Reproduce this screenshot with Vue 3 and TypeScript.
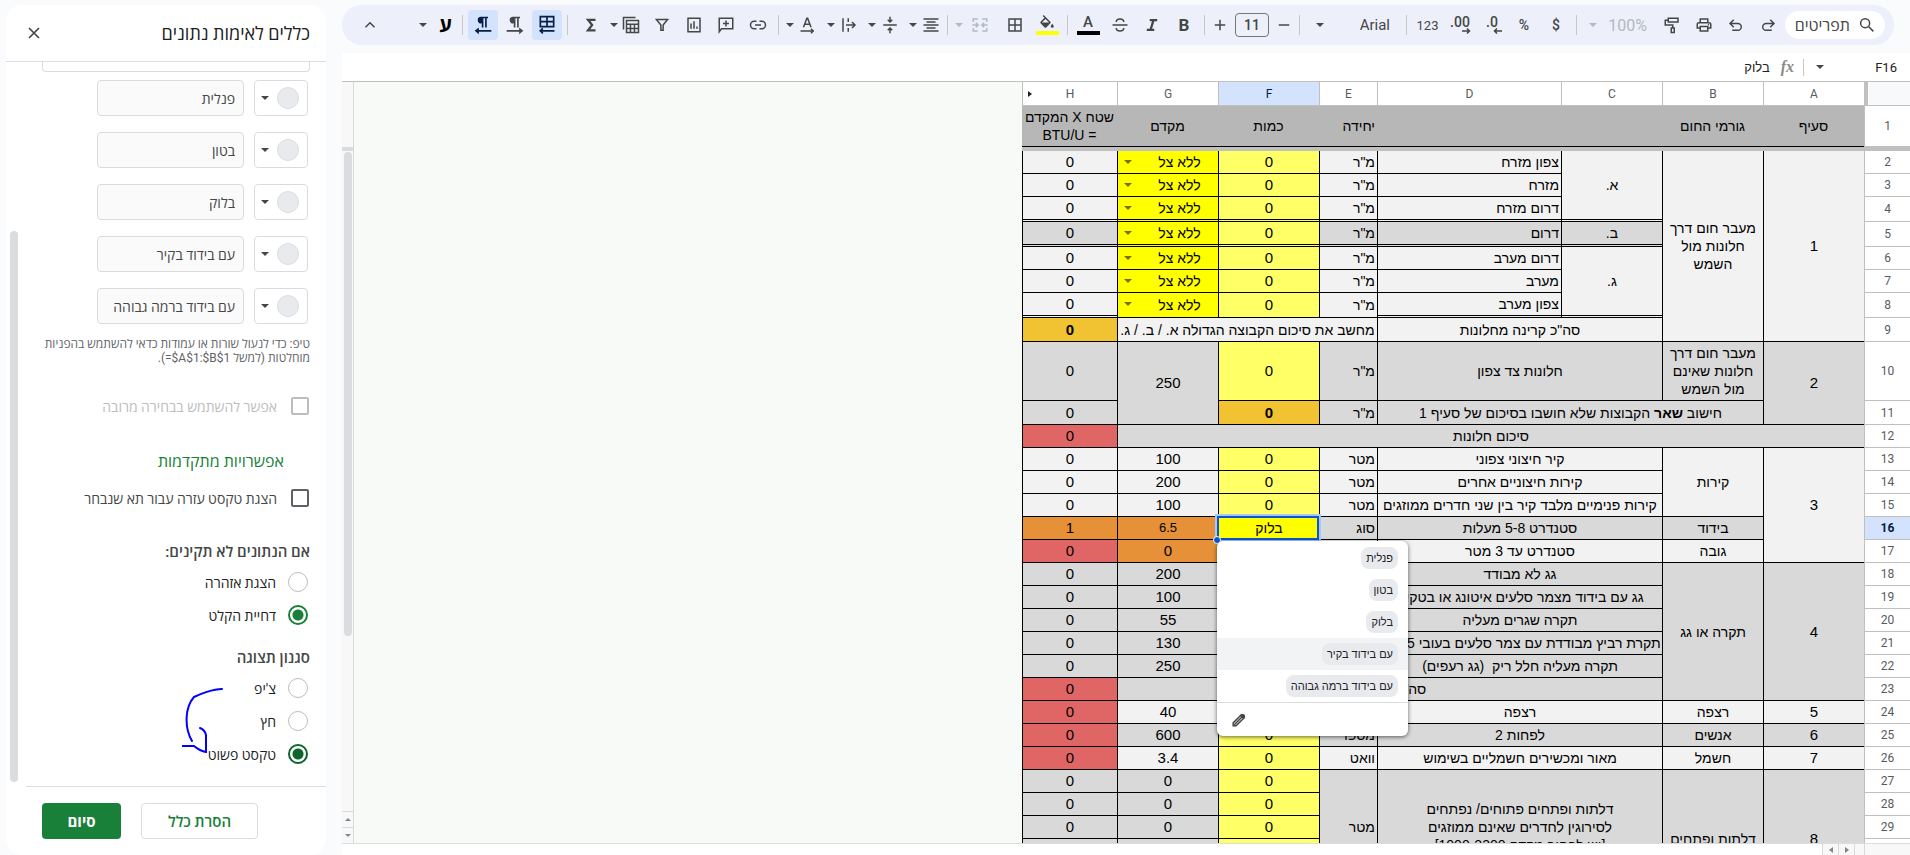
<script setup lang="ts">
import { ref } from 'vue'

interface Cell {
  t?: string
  c?: string
  cs?: number
  rs?: number
  drop?: boolean
  sel?: boolean
  lines?: string[]
  strong?: [string, string, string]
}
interface Row {
  n: number
  h: number
  cells: Cell[]
}

const options: string[] = ['פנלית', 'בטון', 'בלוק', 'עם בידוד בקיר', 'עם בידוד ברמה גבוהה']
const columns: string[] = ['A', 'B', 'C', 'D', 'E', 'F', 'G', 'H']

const invalidMode = ref('reject')
const displayStyle = ref('plain')
const allowMulti = ref(false)
const showHelp = ref(false)

const isNumber = (t?: string): boolean => /^[\d.]+$/.test(t ?? '')

const unit = 'מ"ר'
const zeroH: Cell = { t: '0' }
const qty: Cell = { t: '0', c: 'pale' }
const shade: Cell = { t: 'ללא צל', c: 'yellow', drop: true }

const rows: Row[] = [
  { n: 2, h: 23, cells: [{ t: '1', rs: 8 }, { lines: ['מעבר חום דרך', 'חלונות מול', 'השמש'], rs: 8 }, { t: 'א.', rs: 3, c: 'dbl' }, { t: 'צפון מזרח', c: 'start' }, { t: unit, c: 'start' }, qty, shade, zeroH] },
  { n: 3, h: 23, cells: [{ t: 'מזרח', c: 'start' }, { t: unit, c: 'start' }, qty, shade, zeroH] },
  { n: 4, h: 25, cells: [{ t: 'דרום מזרח', c: 'start dbl' }, { t: unit, c: 'start dbl' }, { t: '0', c: 'pale dbl' }, { ...shade, c: 'yellow dbl' }, { t: '0', c: 'dbl' }] },
  { n: 5, h: 25, cells: [{ t: 'ב.', c: 'grey dbl' }, { t: 'דרום', c: 'grey start dbl' }, { t: unit, c: 'grey start dbl' }, { t: '0', c: 'pale dbl' }, { ...shade, c: 'yellow dbl' }, { t: '0', c: 'grey dbl' }] },
  { n: 6, h: 23, cells: [{ t: 'ג.', rs: 3, c: 'dbl' }, { t: 'דרום מערב', c: 'start' }, { t: unit, c: 'start' }, qty, shade, zeroH] },
  { n: 7, h: 23, cells: [{ t: 'מערב', c: 'start' }, { t: unit, c: 'start' }, qty, shade, zeroH] },
  { n: 8, h: 25, cells: [{ t: 'צפון מערב', c: 'start dbl' }, { t: unit, c: 'start' }, qty, shade, { t: '0', c: 'dbl' }] },
  { n: 9, h: 24, cells: [{ t: 'סה"כ קרינה מחלונות', cs: 2 }, { t: 'מחשב את סיכום הקבוצה הגדולה א. / ב. / ג.', cs: 3 }, { t: '0', c: 'gold bold' }] },
  { n: 10, h: 59, cells: [{ t: '2', rs: 2, c: 'grey' }, { lines: ['מעבר חום דרך', 'חלונות שאינם', 'מול השמש'], c: 'grey' }, { t: 'חלונות צד צפון', cs: 2, c: 'grey' }, { t: unit, c: 'grey start' }, qty, { t: '250', rs: 2, c: 'grey' }, { t: '0', c: 'grey' }] },
  { n: 11, h: 24, cells: [{ strong: ['חישוב ', 'שאר', ' הקבוצות שלא חושבו בסיכום של סעיף 1'], cs: 3, c: 'grey' }, { t: unit, c: 'grey start' }, { t: '0', c: 'gold bold' }, { t: '0', c: 'grey' }] },
  { n: 12, h: 23, cells: [{ t: 'סיכום חלונות', cs: 7, c: 'grey' }, { t: '0', c: 'red' }] },
  { n: 13, h: 23, cells: [{ t: '3', rs: 5 }, { t: 'קירות', rs: 3 }, { t: 'קיר חיצוני צפוני', cs: 2 }, { t: 'מטר', c: 'start' }, qty, { t: '100' }, zeroH] },
  { n: 14, h: 23, cells: [{ t: 'קירות חיצוניים אחרים', cs: 2 }, { t: 'מטר', c: 'start' }, qty, { t: '200' }, zeroH] },
  { n: 15, h: 23, cells: [{ t: 'קירות פנימיים מלבד קיר בין שני חדרים ממוזגים', cs: 2 }, { t: 'מטר', c: 'start' }, qty, { t: '100' }, zeroH] },
  { n: 16, h: 23, cells: [{ t: 'בידוד', c: 'grey' }, { t: 'סטנדרט 5-8 מעלות', cs: 2, c: 'grey' }, { t: 'סוג', c: 'grey start' }, { t: 'בלוק', c: 'yellow', sel: true }, { t: '6.5', c: 'orange small' }, { t: '1', c: 'orange' }] },
  { n: 17, h: 23, cells: [{ t: 'גובה' }, { t: 'סטנדרט עד 3 מטר', cs: 2 }, {}, { c: 'pale' }, { t: '0', c: 'orange' }, { t: '0', c: 'red' }] },
  { n: 18, h: 23, cells: [{ t: '4', rs: 6, c: 'grey' }, { t: 'תקרה או גג', rs: 6, c: 'grey' }, { t: 'גג לא מבודד', cs: 2, c: 'grey' }, { c: 'grey' }, { c: 'pale' }, { t: '200', c: 'grey' }, { t: '0', c: 'grey' }] },
  { n: 19, h: 23, cells: [{ t: 'גג עם בידוד מצמר סלעים איטונג או בטקיט', cs: 2, c: 'grey' }, { c: 'grey' }, { c: 'pale' }, { t: '100', c: 'grey' }, { t: '0', c: 'grey' }] },
  { n: 20, h: 23, cells: [{ t: 'תקרה שגרים מעליה', cs: 2, c: 'grey' }, { c: 'grey' }, { c: 'pale' }, { t: '55', c: 'grey' }, { t: '0', c: 'grey' }] },
  { n: 21, h: 23, cells: [{ t: 'תקרת רביץ מבודדת עם צמר סלעים בעובי 5 ס"מ', cs: 2, c: 'grey' }, { c: 'grey' }, { c: 'pale' }, { t: '130', c: 'grey' }, { t: '0', c: 'grey' }] },
  { n: 22, h: 23, cells: [{ t: 'תקרה מעליה חלל ריק  (גג רעפים)', cs: 2, c: 'grey' }, { c: 'grey' }, { c: 'pale' }, { t: '250', c: 'grey' }, { t: '0', c: 'grey' }] },
  { n: 23, h: 23, cells: [{ t: 'סה"כ תקרות', cs: 5, c: 'grey' }, { t: '0', c: 'red' }] },
  { n: 24, h: 23, cells: [{ t: '5' }, { t: 'רצפה' }, { t: 'רצפה', cs: 2 }, {}, { c: 'pale' }, { t: '40' }, { t: '0', c: 'red' }] },
  { n: 25, h: 23, cells: [{ t: '6', c: 'grey' }, { t: 'אנשים', c: 'grey' }, { t: 'לפחות 2', cs: 2, c: 'grey' }, { t: 'מספר', c: 'grey start' }, qty, { t: '600', c: 'grey' }, { t: '0', c: 'red' }] },
  { n: 26, h: 23, cells: [{ t: '7' }, { t: 'חשמל' }, { t: 'מאור ומכשירים חשמליים בשימוש', cs: 2 }, { t: 'וואט', c: 'start' }, qty, { t: '3.4' }, { t: '0', c: 'red' }] },
  { n: 27, h: 23, cells: [{ t: '8', rs: 6, c: 'grey' }, { t: 'דלתות ופתחים', rs: 6, c: 'grey' }, { lines: ['דלתות ופתחים פתוחים/ נפתחים', 'לסירוגין לחדרים שאינם ממוזגים', '[יש לבחור מקדם 1000-2300]'], cs: 2, rs: 5, c: 'grey' }, { t: 'מטר', rs: 5, c: 'grey start' }, qty, { t: '0', c: 'grey' }, { t: '0', c: 'grey' }] },
  { n: 28, h: 23, cells: [qty, { t: '0', c: 'grey' }, { t: '0', c: 'grey' }] },
  { n: 29, h: 23, cells: [qty, { t: '0', c: 'grey' }, { t: '0', c: 'grey' }] },
  { n: 30, h: 23, cells: [qty, { t: '0', c: 'grey' }, { t: '0', c: 'grey' }] },
  { n: 31, h: 23, cells: [qty, { t: '0', c: 'grey' }, { t: '0', c: 'grey' }] },
  { n: 32, h: 23, cells: [{ cs: 2, c: 'grey' }, { c: 'grey' }, qty, { t: '0', c: 'grey' }, { t: '0', c: 'grey' }] },
]
</script>

<template>
  <div class="app" dir="rtl">
    <main class="main">
      <div class="toolbar" role="toolbar" aria-label="סרגל כלים">
        <button class="menus" type="button">
          <svg viewBox="0 0 24 24" class="ico"><circle cx="9.5" cy="9.5" r="6" fill="none" stroke="currentColor" stroke-width="2" /><path d="M14 14l6.5 6.5" stroke="currentColor" stroke-width="2" /></svg>
          <span>תפריטים</span>
        </button>
        <button class="tb" type="button" aria-label="ביצוע מחדש"><svg viewBox="0 0 24 24" class="ico"><path d="M15 5l5 5-5 5M19 10H9.500a4.500 4.500 0 0 0 0 9H17" fill="none" stroke="currentColor" stroke-width="2" /></svg></button>
        <button class="tb" type="button" aria-label="ביטול"><svg viewBox="0 0 24 24" class="ico"><path d="M9 5l-5 5 5 5M5 10h9.500a4.500 4.500 0 0 1 0 9H7" fill="none" stroke="currentColor" stroke-width="2" /></svg></button>
        <button class="tb" type="button" aria-label="הדפסה"><svg viewBox="0 0 24 24" class="ico"><path d="M19 8h-1V3H6v5H5c-1.700 0-3 1.300-3 3v6h4v4h12v-4h4v-6c0-1.700-1.300-3-3-3zM8 5h8v3H8V5zm8 14H8v-4h8v4zm2-4v-2H6v2H4v-4c0-.6.4-1 1-1h14c.6 0 1 .4 1 1v4h-2z" fill="currentColor" /><circle cx="18" cy="11.500" r="1" fill="currentColor" /></svg></button>
        <button class="tb" type="button" aria-label="צביעת עיצוב"><svg viewBox="0 0 24 24" class="ico"><path d="M7 3h13v5H7zM7 5.500H3V12h10v4M11 16h4v6h-4z" fill="none" stroke="currentColor" stroke-width="2" /></svg></button>
        <button class="zoom" type="button" disabled><span>100%</span><i class="caret"></i></button>
        <i class="sep"></i>
        <button class="tb txt" type="button">$</button>
        <button class="tb txt" type="button">%</button>
        <button class="tb dec" type="button" dir="ltr"><span>.0</span><svg viewBox="0 0 10 6"><path d="M9 3H2M4 .5L1.500 3 4 5.500" fill="none" stroke="currentColor" stroke-width="1.500" /></svg></button>
        <button class="tb dec" type="button" dir="ltr"><span>.00</span><svg viewBox="0 0 10 6"><path d="M1 3h7M6 .5L8.500 3 6 5.500" fill="none" stroke="currentColor" stroke-width="1.500" /></svg></button>
        <button class="tb num" type="button">123</button>
        <i class="sep"></i>
        <button class="font" type="button"><span>Arial</span><i class="caret"></i></button>
        <i class="sep"></i>
        <button class="step" type="button" aria-label="הקטנת גופן"><svg viewBox="0 0 24 24" class="ico"><path d="M5 12h14" stroke="currentColor" stroke-width="2" /></svg></button>
        <input class="size" value="11" aria-label="גודל גופן" />
        <button class="step" type="button" aria-label="הגדלת גופן"><svg viewBox="0 0 24 24" class="ico"><path d="M5 12h14M12 5v14" stroke="currentColor" stroke-width="2" /></svg></button>
        <i class="sep"></i>
        <button class="tb bld" type="button">B</button>
        <button class="tb" type="button" aria-label="נטוי"><svg viewBox="0 0 24 24" class="ico"><path d="M9 5.500h10M5 18.500h10M14 5.500l-4 13" fill="none" stroke="currentColor" stroke-width="3" /></svg></button>
        <button class="tb" type="button" aria-label="קו חוצה"><svg viewBox="0 0 24 24" class="ico"><path d="M2 12h20M17 8c0-2.500-2-4-5-4S7 5.500 7 8M7 16c0 2.500 2 4 5 4s5-1.500 5-4" fill="none" stroke="currentColor" stroke-width="2" /></svg></button>
        <button class="tb ink" type="button"><span>A</span><i class="bar black"></i></button>
        <i class="sep"></i>
        <button class="tb ink" type="button" aria-label="צבע מילוי"><svg viewBox="0 0 24 20"><path d="M16.500 8.900L7.600 0 6.200 1.400l2.400 2.400-5.200 5.200c-.5.5-.5 1.500 0 2.100l5.500 5.500c.6.6 1.500.6 2.100 0l5.500-5.600c.5-.6.5-1.500 0-2.100zM5.200 10L10 5.200 14.800 10zM19 11.500s-2 2.200-2 3.500a2 2 0 0 0 4 0c0-1.300-2-3.500-2-3.500z" fill="currentColor" /></svg><i class="bar bright"></i></button>
        <button class="tb" type="button" aria-label="גבולות"><svg viewBox="0 0 24 24" class="ico"><path d="M4 4h16v16H4zM12 4v16M4 12h16" fill="none" stroke="currentColor" stroke-width="2" /></svg></button>
        <button class="merge" type="button" disabled aria-label="מיזוג תאים"><svg viewBox="0 0 24 24" class="ico"><path d="M9 4H3v4M3 16v4h6M15 4h6v4M21 16v4h-6M2 12h7M15 12h7M6.500 9l3 3-3 3M17.500 9l-3 3 3 3" fill="none" stroke="currentColor" stroke-width="2" /></svg><i class="caret"></i></button>
        <i class="sep"></i>
        <div class="splits">
          <button class="split" type="button" aria-label="יישור אופקי"><svg viewBox="0 0 24 24" class="ico"><path d="M2 4h20M6 8h12M2 12h20M6 16h12M2 20h20" stroke="currentColor" stroke-width="2" /></svg><i class="caret"></i></button>
          <button class="split" type="button" aria-label="יישור אנכי"><svg viewBox="0 0 24 24" class="ico"><path d="M3 12h18M12 1v6M12 23v-6M9 5l3 3 3-3M9 19l3-3 3 3" fill="none" stroke="currentColor" stroke-width="2" /></svg><i class="caret"></i></button>
          <button class="split" type="button" aria-label="גלישת טקסט"><svg viewBox="0 0 24 24" class="ico"><path d="M4 3v18M11 3v5M11 16v5M8 12h11M16 8l4 4-4 4" fill="none" stroke="currentColor" stroke-width="2" /></svg><i class="caret"></i></button>
          <button class="split" type="button" aria-label="סיבוב טקסט"><svg viewBox="0 0 24 24" class="ico"><path d="M6 15l4.500-12h1L16 15M7.500 11h7M2 20h17M16 17l3 3-3 3" fill="none" stroke="currentColor" stroke-width="2" /></svg><i class="caret"></i></button>
        </div>
        <i class="sep"></i>
        <button class="tb" type="button" aria-label="קישור"><svg viewBox="0 0 24 24" class="ico"><path d="M10 7H7a5 5 0 0 0 0 10h3M14 7h3a5 5 0 0 1 0 10h-3M8 12h8" fill="none" stroke="currentColor" stroke-width="2" /></svg></button>
        <button class="tb" type="button" aria-label="תגובה"><svg viewBox="0 0 24 24" class="ico"><path d="M3 21V3h18v14H6zM12 6v8M8 10h8" fill="none" stroke="currentColor" stroke-width="2" /></svg></button>
        <button class="tb" type="button" aria-label="תרשים"><svg viewBox="0 0 24 24" class="ico"><path d="M4 3h16v18H4zM8 10v7M12 7v10M16 14v3" fill="none" stroke="currentColor" stroke-width="2" /></svg></button>
        <button class="tb" type="button" aria-label="מסנן"><svg viewBox="0 0 24 24" class="ico"><path d="M4.500 4.500h15L13.500 12v7h-3v-7z" fill="none" stroke="currentColor" stroke-width="2" /></svg></button>
        <button class="split views" type="button" aria-label="תצוגות"><svg viewBox="0 0 24 24" class="ico"><path d="M2 18V2h16M6 6h16v16H6zM6 11h16M6 16.500h16M11.300 11v11M16.600 11v11" fill="none" stroke="currentColor" stroke-width="2" /></svg><i class="caret"></i></button>
        <button class="tb wide" type="button" aria-label="פונקציות"><svg viewBox="0 0 24 24" class="ico"><path d="M18 5H8l5.500 7L8 19h10" fill="none" stroke="currentColor" stroke-width="3" /></svg></button>
        <i class="sep"></i>
        <button class="tb on" type="button" aria-label="גיליון מימין לשמאל"><svg viewBox="0 0 24 24" class="big"><path d="M4 2h16v12H4zM12 2v12M4 8h16M3 19h18M7 16l-3 3 3 3" fill="none" stroke="currentColor" stroke-width="2" /></svg></button>
        <button class="tb" type="button" aria-label="משמאל לימין"><svg viewBox="0 0 24 24" class="big"><path d="M9 2h9v2h-1.500v11h-2V4h-2v11h-2v-5a4 4 0 0 1-1.500-8zM2 18h15v-3l5 4-5 4v-3H2z" fill="currentColor" /></svg></button>
        <button class="tb on" type="button" aria-label="מימין לשמאל"><svg viewBox="0 0 24 24" class="big"><path d="M9 2h9v2h-1.500v11h-2V4h-2v11h-2v-5a4 4 0 0 1-1.500-8zM22 18H7v-3l-5 4 5 4v-3h15z" fill="currentColor" /></svg></button>
        <i class="sep"></i>
        <button class="lang" type="button"><b>ע</b><i class="caret"></i></button>
        <button class="tb collapse" type="button" aria-label="הסתרת תפריטים"><svg viewBox="0 0 24 24" class="ico"><path d="M6 15l6-6 6 6" fill="none" stroke="currentColor" stroke-width="2" /></svg></button>
      </div>

      <div class="formula">
        <span class="ref">F16</span>
        <i class="caret"></i>
        <i class="fsep"></i>
        <span class="fx">fx</span>
        <span class="val">בלוק</span>
      </div>

      <div class="sheet">
        <div class="grid">
          <table>
            <colgroup>
              <col class="w-n" /><col class="w-a" /><col class="w-a" /><col class="w-a" /><col class="w-d" /><col class="w-e" /><col class="w-a" /><col class="w-a" /><col class="w-h" />
            </colgroup>
            <thead>
              <tr>
                <td class="corner"></td>
                <th v-for="c in columns" :key="c" scope="col" :class="{ active: c === 'F', last: c === 'H' }">{{ c }}</th>
              </tr>
            </thead>
            <tbody>
              <tr class="titles">
                <th scope="row">1</th>
                <td>סעיף</td>
                <td>גורמי החום</td>
                <td colspan="2"></td>
                <td class="start">יחידה</td>
                <td>כמות</td>
                <td>מקדם</td>
                <td>שטח X המקדם<br />= BTU/U</td>
              </tr>
              <tr class="freeze" aria-hidden="true"><td colspan="9"></td></tr>
              <tr v-for="r in rows" :key="r.n" :style="{ height: r.h + 'px' }">
                <th scope="row" :class="{ active: r.n === 16 }">{{ r.n }}</th>
                <td v-for="(cell, i) in r.cells" :key="i" :class="[cell.c, { drop: cell.drop, sel: cell.sel, digits: isNumber(cell.t) }]" :colspan="cell.cs" :rowspan="cell.rs">
                  <template v-if="cell.lines"><div v-for="l in cell.lines" :key="l">{{ l }}</div></template>
                  <template v-else-if="cell.strong">{{ cell.strong[0] }}<b>{{ cell.strong[1] }}</b>{{ cell.strong[2] }}</template>
                  <template v-else>{{ cell.t }}</template>
                  <i v-if="cell.drop" class="caret"></i>
                  <template v-if="cell.sel">
                    <i class="handle"></i>
                    <div class="menu" role="listbox" aria-label="אפשרויות">
                      <div v-for="(o, k) in options" :key="o" class="opt" :class="{ hover: k === 3 }" role="option"><span class="chip">{{ o }}</span></div>
                      <div class="foot">
                        <button type="button" aria-label="עריכה"><svg viewBox="0 0 24 24"><path d="M2 22v-5L16 3l5 5L7 22zM4 20l13-13" fill="none" stroke="currentColor" stroke-width="2.500" /><path d="M14 5l3-3q1.500-1.500 3 0l2 2q1.500 1.500 0 3l-3 3z" fill="currentColor" /></svg></button>
                      </div>
                    </div>
                  </template>
                </td>
              </tr>
            </tbody>
          </table>
          <div class="blank"></div>
          <div class="vbar">
            <i class="vfreeze"></i>
            <i class="vthumb"></i>
            <i class="vbtn up"></i>
            <i class="vbtn down"></i>
          </div>
        </div>
        <div class="hbar">
          <i class="hcorner"></i>
          <i class="hgap"></i>
          <i class="hbtn right"></i>
          <i class="hbtn left"></i>
        </div>
      </div>
    </main>

    <aside class="panel">
      <header>
        <h1>כללים לאימות נתונים</h1>
        <button type="button" aria-label="סגירה"><svg viewBox="0 0 12 12"><path d="M1 1l10 10M11 1L1 11" stroke="currentColor" stroke-width="1.700" /></svg></button>
      </header>
      <div class="body">
        <div class="criteria"></div>
        <div v-for="o in options" :key="o" class="item">
          <button type="button" class="color" aria-label="צבע"><i class="dot"></i><i class="caret"></i></button>
          <input type="text" :value="o" aria-label="ערך" />
        </div>
        <p class="tip">טיפ: כדי לנעול שורות או עמודות כדאי להשתמש בהפניות מוחלטות (למשל <bdi dir="ltr">=$A$1:$B$1</bdi>).</p>
        <label class="check off"><input v-model="allowMulti" type="checkbox" disabled />אפשר להשתמש בבחירה מרובה</label>
        <button type="button" class="adv">אפשרויות מתקדמות</button>
        <label class="check"><input v-model="showHelp" type="checkbox" />הצגת טקסט עזרה עבור תא שנבחר</label>
        <h2>אם הנתונים לא תקינים:</h2>
        <label class="radio"><input v-model="invalidMode" type="radio" value="warn" />הצגת אזהרה</label>
        <label class="radio"><input v-model="invalidMode" type="radio" value="reject" />דחיית הקלט</label>
        <h2 class="second">סגנון תצוגה</h2>
        <label class="radio"><input v-model="displayStyle" type="radio" value="chip" />צ'יפ</label>
        <label class="radio"><input v-model="displayStyle" type="radio" value="arrow" />חץ</label>
        <label class="radio deep"><input v-model="displayStyle" type="radio" value="plain" />טקסט פשוט</label>
        <svg class="scribble" viewBox="0 0 42 66"><path d="M40 2C31 2 18 7 12 10C3 20 2 40 10 54M18 41q5 2 6 7v17q-6-1-12-6H0" fill="none" stroke="#0000ff" stroke-width="2" stroke-linecap="round" /></svg>
        <i class="pthumb"></i>
      </div>
      <footer>
        <button type="button" class="remove">הסרת כלל</button>
        <button type="button" class="done">סיום</button>
      </footer>
    </aside>
  </div>
</template>

<style>
body { margin: 0; background: #f9fbfd; overflow: hidden; }
</style>

<style scoped>
* { box-sizing: border-box; }
.app { display: flex; height: 100vh; background: #f9fbfd; font-family: Roboto, "Open Sans", "Liberation Sans", sans-serif; color: #444746; }
button { font: inherit; color: inherit; background: none; border: 0; padding: 0; margin: 0; }
.main { flex: 1; min-width: 0; display: flex; flex-direction: column; padding-top: 5px; }
.caret { display: block; width: 0; height: 0; border: 4px solid transparent; border-top-color: #444746; border-bottom: 0; flex: none; }

.toolbar { display: flex; align-items: center; height: 40px; flex: none; margin-right: 16px; padding: 0 9px 0 12px; border-radius: 20px; background: #edf0fa; }
.ico { width: 18px; height: 18px; display: block; flex: none; }
.big { width: 20px; height: 20px; display: block; }
.menus { display: flex; align-items: center; gap: 8px; width: 100px; height: 28px; margin-left: 1px; padding-right: 9px; border-radius: 14px; background: #fff; font-size: 16px; white-space: nowrap; }
.tb { width: 30px; height: 30px; margin: 0 1px; border-radius: 4px; display: flex; align-items: center; justify-content: center; flex: none; }
.tb.on { background: #d3e3fd; color: #041e49; }
.txt { font-size: 14px; font-weight: 500; }
.num { font-size: 13px; width: 31px; }
.dec { flex-direction: column; align-items: center; font-size: 14px; font-weight: 500; line-height: 12px; }
.dec svg { width: 10px; height: 6px; align-self: flex-end; margin-right: 4px; }
.zoom { display: flex; align-items: center; justify-content: space-between; width: 75px; padding: 0 9px 0 8px; font-size: 16px; color: #b4b8c0; }
.zoom .caret, .merge .caret { border-top-color: #b4b8c0; }
.sep { width: 1px; height: 20px; margin: 0 4px; background: #c7c7c7; flex: none; }
.font { display: flex; align-items: center; justify-content: space-between; width: 98px; padding: 0 12px; font-size: 15px; }
.step { width: 22px; height: 24px; display: flex; align-items: center; justify-content: center; }
.size { width: 34px; height: 24px; margin: 0 4px; padding: 0; border: 1px solid #747775; border-radius: 4px; background: transparent; font: 500 14px Roboto, sans-serif; color: #444746; text-align: center; }
.bld { font-size: 17px; font-weight: 700; }
.ink { flex-direction: column; font-size: 15px; font-weight: 500; line-height: 15px; gap: 1px; }
.ink svg { width: 18px; height: 15px; }
.bar { width: 23px; height: 4px; }
.black { background: #000; }
.bright { background: #ff0; }
.merge { display: flex; align-items: center; gap: 8px; width: 47px; padding-right: 10px; color: #b4b8c0; }
.splits { display: flex; gap: 4px; }
.split { display: flex; align-items: center; gap: 5px; width: 37px; padding-right: 3px; }
.views { padding-right: 6px; gap: 4px; }
.wide { width: 35px; }
.lang { display: flex; align-items: center; gap: 12px; padding-right: 6px; color: #000; }
.lang b { font-size: 20px; line-height: 20px; }
.collapse { margin-right: auto; }

.formula { display: flex; align-items: center; height: 29px; flex: none; margin-top: 8px; padding-right: 13px; background: #fff; border-bottom: 1px solid #c0c0c0; font-size: 13px; color: #202124; }
.ref { width: 20px; margin-left: 53px; font-size: 13px; }
.fsep { width: 1px; height: 17px; margin: 0 12px 0 9px; background: #c7c7c7; }
.fx { font: italic 700 16px "Liberation Serif", serif; color: #8a8a8a; margin-left: 11px; }
.val { font-family: "Liberation Sans", sans-serif; font-size: 13px; }

.sheet { flex: 1; min-height: 0; display: flex; flex-direction: column; }
.grid { flex: 1; min-height: 0; display: flex; overflow: hidden; align-items: flex-start; }
table { width: 888px; flex: none; table-layout: fixed; border-spacing: 0; font: 14px/18px "Liberation Sans", Arial, sans-serif; color: #000; }
.w-n { width: 46px; } .w-a { width: 101px; } .w-d { width: 184px; } .w-e { width: 58px; } .w-h { width: 95px; }
th, td { padding: 0; border: 0 solid #000; border-width: 0 0 1px 1px; text-align: center; vertical-align: middle; white-space: pre; overflow: hidden; }
td { background: #f2f2f2; }
th { background: #fff; border-color: #c0c0c0; font: 12px/14px Roboto, sans-serif; color: #575b5f; }
thead tr { height: 24px; }
thead th { font-size: 12px; position: relative; }
.last::after { content: ""; position: absolute; left: 5px; top: 9px; border: 3px solid transparent; border-left: 4px solid #202124; border-right: 0; }
.corner { background: #f8f9fa; border-width: 0 0 1px 4px; border-color: #c0c0c0; }
th.active { background: #d3e3fd; color: #041e49; }
tbody th.active { font-weight: 700; }
.titles { height: 41px; }
.titles td { background: #b7b7b7; border-left: 0; }
.freeze { height: 4px; }
.freeze td { background: #c0c0c0; border: 0; height: 4px; line-height: 0; }
td.start { text-align: right; padding-right: 2px; }
.digits { font-size: 15px; }
.grey { background: #d9d9d9; }
.pale { background: #ffff66; }
.yellow { background: #ff0; }
.gold { background: #f1c232; }
.orange { background: #e69138; }
.red { background: #e06666; }
.bold { font-weight: 700; }
.small { font-size: 13px; }
.dbl { border-bottom: 3px double #000; }
.drop { position: relative; padding-left: 23px; }
.drop .caret { position: absolute; left: 6px; top: 9px; border-top-color: #7a7200; }
.sel { position: relative; overflow: visible; }
.sel::after { content: ""; position: absolute; inset: -1px 0 -1px -2px; border: 2px solid #0b57d0; box-shadow: 0 0 0 2px #a8c7fa; }
.handle { position: absolute; z-index: 2; left: -6px; bottom: -5px; width: 8px; height: 8px; border: 1px solid #fff; border-radius: 50%; background: #0b57d0; }
.menu { position: absolute; z-index: 3; left: -2px; top: 24px; width: 191px; padding-top: 1px; border-radius: 6px; background: #fff; box-shadow: 0 1px 4px rgba(0, 0, 0, .6); overflow: hidden; }
.opt { display: flex; align-items: center; height: 32px; padding-right: 10px; }
.opt.hover { background: #f1f3f4; }
.chip { height: 22px; padding: 0 5px; border-radius: 8px; background: #e8eaed; font-size: 11px; line-height: 22px; color: #202124; }
.foot { display: flex; justify-content: flex-end; align-items: center; height: 34px; border-top: 1px solid #dadce0; padding-left: 15px; color: #444; }
.foot svg { display: block; width: 14px; height: 14px; }
.blank { flex: 1; align-self: stretch; background: #f8faf7; }
.vbar { position: relative; width: 12px; flex: none; align-self: stretch; display: flex; flex-direction: column; align-items: center; background: #f8f8f8; border-right: 1px solid #d9d9d9; }
.vfreeze { width: 100%; height: 4px; margin-top: 65px; background: #dadce0; }
.vthumb { width: 8px; height: 484px; margin-top: 1px; border-radius: 4px; background: #dadce0; }
.vbtn { width: 100%; height: 16px; border-top: 1px solid #d9d9d9; display: flex; align-items: center; justify-content: center; }
.up { margin-top: auto; }
.vbtn::after { content: ""; border: 3px solid transparent; }
.up::after { border-bottom-color: #80868b; border-top: 0; }
.down::after { border-top-color: #80868b; border-bottom: 0; }
.hbar { display: flex; height: 12px; flex: none; border-top: 1px solid #dadce0; background: #fff; }
.hcorner { width: 46px; background: #f8f8f8; border-left: 1px solid #d9d9d9; }
.hgap { width: 10px; background: #f8f8f8; border-left: 1px solid #d9d9d9; }
.hbtn { width: 16px; display: flex; align-items: center; justify-content: center; background: #f8f8f8; border-left: 1px solid #d9d9d9; }
.hbtn::after { content: ""; border: 3px solid transparent; }
.right::after { border-left: 4px solid #80868b; border-right: 0; }
.left::after { border-right: 4px solid #80868b; border-left: 0; }

.panel { width: 320px; flex: none; display: flex; flex-direction: column; margin: 5px 16px 0 6px; border-radius: 16px; background: #fff; overflow: hidden; }
.panel header { display: flex; align-items: center; justify-content: space-between; height: 57px; flex: none; padding: 0 16px 0 22px; border-bottom: 1px solid #dadce0; }
h1 { margin: 0; font-size: 18px; font-weight: 400; color: #202124; }
header svg { display: block; width: 12px; height: 12px; }
.body { position: relative; flex: 1; min-height: 0; display: flex; flex-direction: column; align-items: flex-start; padding: 0 16px 0 36px; overflow: hidden; }
.criteria { width: 268px; height: 10px; margin-bottom: 8px; flex: none; border: 1px solid #dadce0; border-top: 0; border-radius: 0 0 4px 4px; }
.item { display: flex; gap: 10px; margin-right: 2px; margin-bottom: 16px; flex: none; }
.color { display: flex; align-items: center; justify-content: space-between; width: 54px; height: 36px; padding: 0 8px 0 6px; border: 1px solid #dadce0; border-radius: 4px; }
.dot { width: 22px; height: 22px; border: 1px solid #dadce0; border-radius: 50%; background: #e8eaed; }
.item input { width: 147px; height: 36px; padding: 0 8px; border: 1px solid #dadce0; border-radius: 4px; background: #fafafa; font: 14px Roboto, "Open Sans", sans-serif; color: #444746; }
.tip { width: 268px; margin: -3px 0 0; font-size: 12px; line-height: 14px; color: #5f6368; }
.check { display: flex; align-items: center; gap: 14px; height: 20px; margin: 31px 1px 0 0; font-size: 14px; color: #444746; white-space: nowrap; }
.check input { appearance: none; width: 18px; height: 18px; margin: 0; border: 2px solid #5f6368; border-radius: 2px; }
.check.off { color: #bdbdbd; }
.check.off input { border-color: #bdbdbd; }
.adv { margin: 36px 26px 0 0; height: 20px; font-size: 16px; font-weight: 500; line-height: 20px; color: #188038; }
.adv + .check { margin-top: 16px; }
h2 { margin: 34px 0 0; font-size: 15px; line-height: 20px; font-weight: 600; color: #444746; }
h2.second { margin-top: 23px; }
.radio { display: flex; align-items: center; gap: 12px; height: 20px; margin: 13px 2px 0 0; font-size: 14px; color: #202124; white-space: nowrap; }
h2 + .radio { margin-top: 10px; }
.radio input { appearance: none; width: 20px; height: 20px; margin: 0; border: 1px solid #bdbdbd; border-radius: 50%; }
.radio input:checked { border: 2px solid #188038; background: radial-gradient(circle, #188038 5px, #fff 6px); }
.radio.deep input:checked { border-color: #0d652d; background: radial-gradient(circle, #0d652d 5px, #fff 6px); }
.scribble { position: absolute; left: 176px; bottom: 33px; width: 42px; height: 66px; }
.pthumb { position: absolute; left: 4px; bottom: 4px; width: 8px; height: 551px; border-radius: 4px; background: #dadce0; }
.panel footer { display: flex; gap: 20px; height: 69px; flex: none; margin-left: 20px; padding: 16px 68px 0 0; border-top: 1px solid #dadce0; }
.panel footer button { height: 36px; border-radius: 4px; font-size: 15px; font-weight: 600; }
.panel footer .remove { width: 117px; border: 1px solid #dadce0; color: #188038; }
.panel footer .done { width: 79px; background: #188038; color: #fff; font-weight: 700; }
</style>
